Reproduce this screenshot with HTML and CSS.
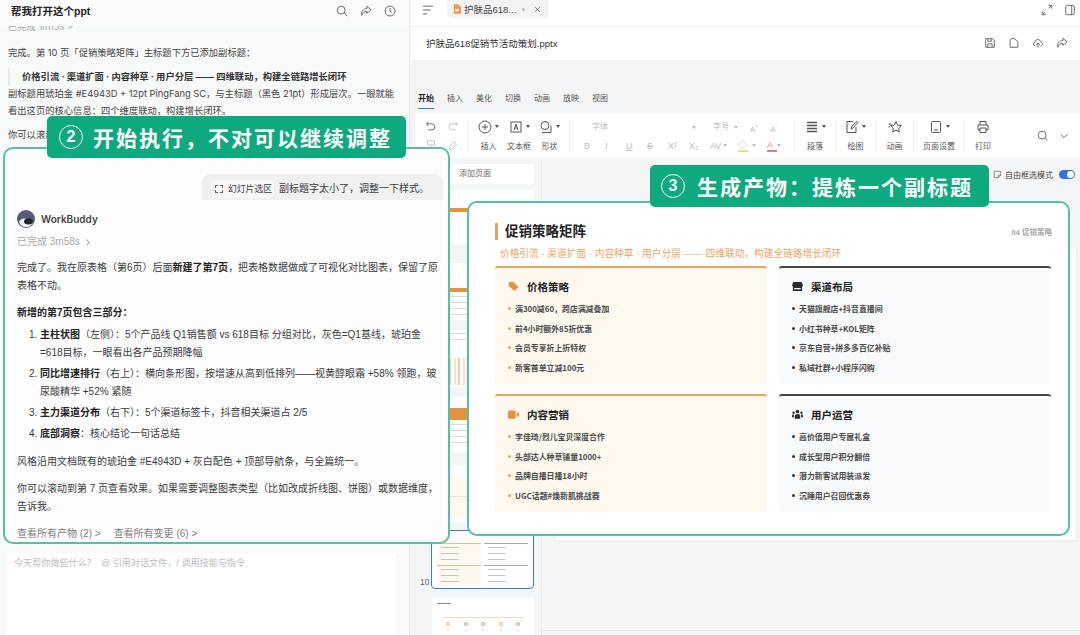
FILE: index.html
```html
<!DOCTYPE html>
<html lang="zh-CN">
<head>
    <meta charset="UTF-8">
    <title>WorkBuddy</title>
    <link rel="stylesheet" href="styles.css">
</head>
<body>
    <div class="app">
        <!-- left: chat -->
        <section class="chat">
            <header class="chat-head">
                <h1>帮我打开这个ppt</h1>
                <div class="head-icons">
                    <svg class="ic" viewBox="0 0 14 14"><circle cx="6" cy="6" r="4.6"/><path d="M9.500 9.500L13 13"/></svg>
                    <svg class="ic" viewBox="0 0 14 14"><path d="M8 1.500l5 4.200-5 4V7.300C5 7.300 3 9 2 12c-.6-4.500 1.500-7.500 6-7.900z"/></svg>
                    <svg class="ic" viewBox="0 0 14 14"><circle cx="7" cy="7" r="5.800"/><path d="M7 3.500V7l2.300 1.500"/></svg>
                </div>
            </header>
            <div class="chat-old">
                <p class="old-done">已完成 1m15s &gt;</p>
                <p class="old-line">完成。第 10 页「促销策略矩阵」主标题下方已添加副标题：</p>
                <blockquote>价格引流 · 渠道扩面 · 内容种草 · 用户分层 —— 四维联动，构建全链路增长闭环</blockquote>
                <p class="old-para">副标题用琥珀金 #E4943D + 12pt PingFang SC，与主标题（黑色 21pt）形成层次。一眼就能看出这页的核心信息：四个维度联动，构建增长闭环。</p>
                <p class="old-line">你可以滚动查看效果。</p>
            </div>
            <div class="chat-input">今天帮你做些什么？ &nbsp;@ 引用对话文件，/ 调用技能与指令</div>
        </section>

        <!-- right: document -->
        <section class="doc">
            <div class="tabbar">
                <svg class="ic menu-ic" viewBox="0 0 14 14"><path d="M1 2.500h12M1 7h9M1 11.500h5"/></svg>
                <div class="tab">
                    <svg class="file-ic" viewBox="0 0 10 12"><path d="M1 0h5.500L10 3.500V12H1z" fill="#ee9a4d"/><rect x="3" y="6" width="4" height="3" fill="#fff"/></svg>
                    <span>护肤品618...</span>
                    <i class="tab-dot"></i>
                    <svg class="ic tab-x" viewBox="0 0 10 10"><path d="M1.500 1.500l7 7M8.500 1.500l-7 7"/></svg>
                </div>
                <div class="tabbar-right">
                    <svg class="ic" viewBox="0 0 14 14"><path d="M8.500 1.500h4v4M12.500 1.500L9 5M5.500 12.500h-4v-4M1.500 12.500L5 9"/></svg>
                    <svg class="ic" viewBox="0 0 14 14"><rect x="2" y="1.500" width="10" height="11" rx="2"/><path d="M9 1.500v11"/></svg>
                </div>
            </div>
            <div class="titlebar">
                <span>护肤品618促销节活动策划.pptx</span>
                <div class="title-icons">
                    <svg class="ic" viewBox="0 0 14 14"><path d="M2 2h8l2 2v8H2zM4.500 2v3h4V2M4.500 12V8h5v4"/></svg>
                    <svg class="ic" viewBox="0 0 14 14"><path d="M2.500 3.500V12h9V5.500L8 2H4z"/></svg>
                    <svg class="ic" viewBox="0 0 14 14"><path d="M4 10.500C1 10.500 1 6.500 3.500 6c.5-4 6-4 7 0 2.500.5 2.500 4.500-.5 4.500M7 12.500V7M5 9l2-2 2 2"/></svg>
                    <svg class="ic" viewBox="0 0 14 14"><path d="M8 1.500l5 4.200-5 4V7.300C5 7.300 3 9 2 12c-.6-4.500 1.500-7.500 6-7.900z"/></svg>
                </div>
            </div>
            <nav class="ribbon-tabs">
                <span class="on">开始</span><span>插入</span><span>美化</span><span>切换</span><span>动画</span><span>放映</span><span>视图</span>
            </nav>
            <div class="toolbar">
                <div class="tool-group history">
                    <svg class="ic" viewBox="0 0 14 14"><path d="M4 2L2 4.500 4 7M2 4.500h6a3.500 3.500 0 0 1 0 7H4"/></svg>
                    <svg class="ic faint" viewBox="0 0 14 14"><path d="M10 2l2 2.500L10 7M12 4.500H6a3.500 3.500 0 0 0 0 7h4"/></svg>
                    <svg class="ic faint" viewBox="0 0 14 14"><path d="M3 2h8v5H3zM7 7v5"/></svg>
                    <svg class="ic faint" viewBox="0 0 14 14"><path d="M3 9l5-6 3 3-5 6H3z"/></svg>
                </div>
                <div class="tool-group big insert">
                    <div class="tool"><div class="tool-ic"><svg class="ic lg" viewBox="0 0 14 14"><circle cx="7" cy="7" r="6"/><path d="M7 4v6M4 7h6"/></svg><b class="caret"></b></div><span>插入</span></div>
                    <div class="tool"><div class="tool-ic"><svg class="ic lg" viewBox="0 0 14 14"><rect x="2" y="2" width="10" height="10"/><path d="M5 10l2-6 2 6M5.800 8h2.400"/></svg><b class="caret"></b></div><span>文本框</span></div>
                    <div class="tool"><div class="tool-ic"><svg class="ic lg" viewBox="0 0 14 14"><circle cx="6" cy="5.500" r="4"/><path d="M3 12.500h9M12 6v6"/></svg><b class="caret"></b></div><span>形状</span></div>
                </div>
                <div class="tool-group font">
                    <div class="font-row">
                        <span class="font-name">字体</span><b class="caret faint-caret"></b>
                        <span class="font-size">字号</span><b class="caret faint-caret"></b>
                        <span class="font-grow">A<sup>+</sup></span><span class="font-grow">A<sup>-</sup></span>
                    </div>
                    <div class="font-row styles">
                        <span>B</span><span class="em">I</span><span class="un">U</span><span class="st">S</span><span>X²</span><span>X₂</span><span>AV</span><b class="caret faint-caret"></b>
                        <span class="mark">◇</span><b class="caret faint-caret"></b><span class="red">A</span><b class="caret faint-caret"></b>
                    </div>
                </div>
                <div class="tool-group big w-41">
                    <div class="tool"><div class="tool-ic"><svg class="ic lg" viewBox="0 0 14 14"><path d="M2 2.500h10M2 5.500h10M2 8.500h10M2 11.500h10" stroke-width="1.600"/></svg><b class="caret"></b></div><span>段落</span></div>
                </div>
                <div class="tool-group big w-40">
                    <div class="tool"><div class="tool-ic"><svg class="ic lg" viewBox="0 0 14 14"><path d="M11 7v5.500H2v-11h6M6 9l1-3 5-4.500 1 1L8 8z"/></svg><b class="caret"></b></div><span>绘图</span></div>
                </div>
                <div class="tool-group big w-38">
                    <div class="tool"><div class="tool-ic"><svg class="ic lg" viewBox="0 0 14 14"><path d="M8 1.500l1.700 3.600 3.800.5-2.800 2.600.7 3.800L8 10.200l-3.400 1.800.7-3.800-2.800-2.600 3.800-.5zM.5 4h3M.5 7h1.500"/></svg></div><span>动画</span></div>
                </div>
                <div class="tool-group big w-51">
                    <div class="tool"><div class="tool-ic"><svg class="ic lg" viewBox="0 0 14 14"><rect x="2.500" y="1.500" width="9" height="11" rx="1"/><path d="M5 10h4"/></svg><b class="caret"></b></div><span>页面设置</span></div>
                </div>
                <div class="tool-group big w-36 last">
                    <div class="tool"><div class="tool-ic"><svg class="ic lg" viewBox="0 0 14 14"><path d="M4 5V1.500h6V5M4 10H2V5h10v5h-2M4 8h6v4.500H4z"/></svg></div><span>打印</span></div>
                </div>
                <div class="tool-end">
                    <svg class="ic" viewBox="0 0 14 14"><circle cx="6" cy="6" r="4.600"/><path d="M9.500 9.500L12 12"/></svg>
                    <svg class="ic" viewBox="0 0 14 14"><path d="M3 5l4 4 4-4"/></svg>
                </div>
            </div>
            <div class="workspace">
                <aside class="slides">
                    <div class="add-page">添加页面</div>
                    <div class="thumb t1"><i class="t-band"></i></div>
                    <div class="thumb t2"><i class="t-band"></i><i class="t-lines"></i></div>
                    <div class="thumb t3"><i class="t-lines"></i><i class="t-bars"></i></div>
                    <div class="thumb t4"><i class="t-band"></i><i class="t-lines"></i></div>
                    <div class="thumb t5"><i class="t-cream"></i></div>
                    <div class="thumb-row">
                        <span>10</span>
                        <div class="thumb current">
                            <i class="t-grid warm-t"></i><i class="t-grid"></i><i class="t-grid warm-t"></i><i class="t-grid"></i>
                        </div>
                    </div>
                    <div class="thumb next">
                        <i class="t-title"></i>
                        <i class="t-rule"></i>
                        <div class="t-dots"><i></i><i class="gray"></i><i class="gray"></i><i></i><i class="gray"></i></div>
                    </div>
                </aside>
                <div class="canvas">
                    <div class="canvas-bar">
                        <svg class="ic sm" viewBox="0 0 14 14"><path d="M2 2h10v6l-4 4H2zM8 12V8h4"/></svg>
                        <span>自由框选模式</span>
                        <i class="switch"></i>
                    </div>
                    <div class="slide-paper"></div>
                    <div class="canvas-foot"></div>
                </div>
            </div>
        </section>
    </div>

    <!-- callouts over the app -->
    <div class="banner banner-run"><span class="num">2</span>开始执行，不对可以继续调整</div>
    <div class="banner banner-out"><span class="num">3</span>生成产物：提炼一个副标题</div>

    <article class="card card-chat">
        <div class="bubble"><span class="chip"><i class="chip-box"></i>幻灯片选区</span>副标题字太小了，调整一下样式。</div>
        <div class="bot">
            <svg class="avatar" viewBox="0 0 18 18"><circle cx="9" cy="9" r="9" fill="#59597a"/><path d="M2 12c2-4 5-4 8-3l6 2c0 4-4 6-7 6-3 0-6-2-7-5z" fill="#f4f4f6"/><ellipse cx="11.500" cy="11.500" rx="4.500" ry="3" fill="#23232e"/></svg>
            <b>WorkBuddy</b>
        </div>
        <div class="done">已完成 3m58s <svg class="ic sm" viewBox="0 0 14 14"><path d="M5 2.500L10 7l-5 4.500"/></svg></div>
        <p class="msg">完成了。我在原表格（第6页）后面<b>新建了第7页</b>，把表格数据做成了可视化对比图表，保留了原表格不动。</p>
        <p class="msg"><b>新增的第7页包含三部分：</b></p>
        <ol class="msg-list">
            <li><b>主柱状图</b>（左侧）：5个产品线 Q1销售额 vs 618目标 分组对比，灰色=Q1基线，琥珀金<br>=618目标，一眼看出各产品预期降幅</li>
            <li><b>同比增速排行</b>（右上）：横向条形图，按增速从高到低排列——视黄醇眼霜 +58% 领跑，玻尿酸精华 +52% 紧随</li>
            <li><b>主力渠道分布</b>（右下）：5个渠道标签卡，抖音相关渠道占 2/5</li>
            <li><b>底部洞察</b>：核心结论一句话总结</li>
        </ol>
        <p class="msg">风格沿用文档既有的琥珀金 #E4943D + 灰白配色 + 顶部导航条，与全篇统一。</p>
        <p class="msg">你可以滚动到第 7 页查看效果。如果需要调整图表类型（比如改成折线图、饼图）或数据维度，告诉我。</p>
        <div class="links"><span>查看所有产物 (2) &gt;</span><span>查看所有变更 (6) &gt;</span></div>
    </article>

    <article class="card card-slide">
        <div class="slide-head">
            <h2>促销策略矩阵</h2>
            <span>04 促销策略</span>
        </div>
        <p class="slide-sub">价格引流 · 渠道扩面 · 内容种草 · 用户分层 —— 四维联动，构建全链路增长闭环</p>
        <div class="matrix">
            <div class="cell warm">
                <h3><svg class="cell-ic" viewBox="0 0 12 12"><path d="M1 1h5l5.500 5.500-4.500 4.500L1 5.500z"/></svg>价格策略</h3>
                <ul>
                    <li>满300减60，跨店满减叠加</li>
                    <li>前4小时额外85折优惠</li>
                    <li>会员专享折上折特权</li>
                    <li>新客首单立减100元</li>
                </ul>
            </div>
            <div class="cell cool">
                <h3><svg class="cell-ic" viewBox="0 0 12 12"><path d="M1.500 1h9L12 4.500c0 1-1 1.500-1 1.500v5H1V6S0 5.500 0 4.500zM2.500 7.500v1.500h7V7.500z"/></svg>渠道布局</h3>
                <ul>
                    <li>天猫旗舰店+抖音直播间</li>
                    <li>小红书种草+KOL矩阵</li>
                    <li>京东自营+拼多多百亿补贴</li>
                    <li>私域社群+小程序闪购</li>
                </ul>
            </div>
            <div class="cell warm">
                <h3><svg class="cell-ic" viewBox="0 0 12 12"><rect x="0" y="1.500" width="8.500" height="9" rx="1.500"/><path d="M9.500 4.500l2.500-1.500v6L9.500 7.500z"/></svg>内容营销</h3>
                <ul>
                    <li>李佳琦/烈儿宝贝深度合作</li>
                    <li>头部达人种草铺量1000+</li>
                    <li>品牌自播日播18小时</li>
                    <li>UGC话题#焕新肌挑战赛</li>
                </ul>
            </div>
            <div class="cell cool">
                <h3><svg class="cell-ic" viewBox="0 0 12 12"><circle cx="6" cy="2.800" r="1.900"/><circle cx="1.700" cy="4" r="1.300"/><circle cx="10.300" cy="4" r="1.300"/><path d="M3 10.500V8c0-1.500 1-2.500 3-2.500s3 1 3 2.500v2.500zM0 9V7.500c0-1 .7-1.700 2-1.700v3.200zM12 9V7.500c0-1-.7-1.700-2-1.700v3.200z"/></svg>用户运营</h3>
                <ul>
                    <li>高价值用户专属礼盒</li>
                    <li>成长型用户积分翻倍</li>
                    <li>潜力新客试用装派发</li>
                    <li>沉睡用户召回优惠券</li>
                </ul>
            </div>
        </div>
    </article>
</body>
</html>
```

FILE: styles.css
```css
* {
    margin: 0;
    padding: 0;
    box-sizing: border-box;
}

html, body {
    width: 1080px;
    height: 635px;
    overflow: hidden;
}

body {
    position: relative;
    font-family: "Liberation Sans", "Noto Sans CJK SC", sans-serif;
    color: #2c2c2e;
    background: #f4f5f6;
}

.app {
    display: flex;
    height: 635px;
}

.ic {
    width: 12px;
    height: 12px;
    fill: none;
    stroke: #555;
    stroke-width: 1;
    flex: none;
}

.ic.lg { width: 14px; height: 14px; }
.ic.sm { width: 9px; height: 9px; }
.ic.faint { stroke: #bbb; }

/* chat */
.chat {
    width: 410px;
    flex: none;
    display: flex;
    flex-direction: column;
    background: #f8f9f9;
    border-right: 1px solid #e9eaeb;
}

.chat-head {
    height: 26px;
    flex: none;
    display: flex;
    align-items: center;
    justify-content: space-between;
    padding: 0 13px 5px 11px;
    background: #fbfbfb;
    position: relative;
    z-index: 1;
}

.chat-head h1 {
    font-size: 10.500px;
    font-weight: 700;
    color: #222;
}

.head-icons {
    display: flex;
    gap: 12px;
}

.chat-old {
    flex: 1;
    padding: 0 8px;
    font-family: "Inter", "Noto Sans CJK SC", sans-serif;
    font-size: 9.300px;
    line-height: 17px;
    color: #444;
}

.old-done {
    color: #aaa;
    margin-top: -8px;
}

.old-line {
    margin-top: 9px;
}

.chat-old blockquote {
    margin: 7px 0 0;
    padding-left: 12px;
    border-left: 2px solid #e8e8e8;
    font-weight: 700;
    color: #333;
}

.old-para {
    width: 395px;
}

.old-para + .old-line {
    margin-top: 7px;
}

.chat-input {
    height: 82px;
    flex: none;
    margin: 0 13px 0 6px;
    padding: 3px 8px;
    font-size: 9.100px;
    line-height: 14px;
    color: #bdbdbd;
    background: #fff;
}

/* doc */
.doc {
    flex: 1;
    min-width: 0;
    display: flex;
    flex-direction: column;
}

.tabbar {
    height: 27px;
    flex: none;
    display: flex;
    align-items: center;
    padding: 0 4px 7px 12px;
    background: #fff;
    border-bottom: 1px solid #f0f0f0;
}

.menu-ic {
    margin-right: 13px;
}

.tab {
    width: 102px;
    height: 18px;
    margin-top: -1px;
    display: flex;
    align-items: center;
    gap: 3px;
    padding: 0 5px 0 6px;
    font-size: 9.500px;
    white-space: nowrap;
    color: #444;
    background: #f3f3f4;
    border-radius: 0 0 5px 5px;
}

.file-ic {
    width: 8px;
    height: 10px;
    flex: none;
}

.tab-dot {
    width: 3px;
    height: 3px;
    flex: none;
    margin: 0 6px 0 3px;
    border-radius: 50%;
    background: #bbb;
}

.tab-x {
    width: 7px;
    height: 7px;
}

.tabbar-right {
    margin-left: auto;
    display: flex;
    gap: 11px;
}

.titlebar {
    height: 33px;
    flex: none;
    display: flex;
    align-items: center;
    justify-content: space-between;
    padding: 0 12px 2px 16px;
    font-size: 9.500px;
    color: #333;
    background: #fff;
}

.title-icons {
    display: flex;
    gap: 12px;
}

.ribbon-tabs {
    height: 53px;
    flex: none;
    display: flex;
    align-items: flex-end;
    gap: 13px;
    padding: 0 0 4px 8px;
    font-size: 8px;
    color: #555;
}

.ribbon-tabs span {
    padding-bottom: 4px;
    border-bottom: 1px solid transparent;
    line-height: 11px;
}

.ribbon-tabs .on {
    font-weight: 700;
    color: #222;
    border-bottom-color: #3b7de0;
}

.toolbar {
    height: 45px;
    flex: none;
    margin-left: 5px;
    display: flex;
    align-items: center;
    background: #fff;
    border-radius: 4px 0 0 4px;
}

.tool-group {
    height: 32px;
    flex: none;
    border-right: 1px solid #f2f2f2;
}

.history {
    width: 54px;
    display: grid;
    grid-template-columns: 12px 12px;
    gap: 7px 10px;
    align-content: center;
    padding-left: 10px;
}

.big {
    display: flex;
    justify-content: center;
}

.big.last {
    border-right: 0;
}

.insert {
    width: 101px;
    justify-content: flex-start;
    gap: 8px;
    padding-left: 9px;
}

.w-41 { width: 41px; }
.w-40 { width: 40px; }
.w-38 { width: 38px; }
.w-51 { width: 51px; }
.w-36 { width: 36px; }

.tool {
    display: flex;
    flex-direction: column;
    align-items: center;
    justify-content: space-between;
    font-size: 8px;
    color: #555;
    line-height: 11px;
}

.tool-ic {
    display: flex;
    align-items: center;
    gap: 3px;
}

.caret {
    width: 0;
    height: 0;
    flex: none;
    border: 2px solid transparent;
    border-top: 3px solid #555;
    border-bottom: 0;
}

.faint-caret {
    border-top-color: #bbb;
}

.font {
    width: 225px;
    padding-left: 14px;
    display: flex;
    flex-direction: column;
    justify-content: space-between;
    font-size: 8px;
    line-height: 12px;
    color: #bbb;
    white-space: nowrap;
}

.font-row {
    display: flex;
    align-items: center;
}

.font-name {
    width: 108px;
    flex: none;
    padding-left: 8px;
}

.font-size {
    margin: 0 5px 0 17px;
}

.font-grow {
    margin-left: 12px;
}

.font-grow sup {
    font-size: 5px;
}

.styles {
    font-size: 9px;
}

.styles span {
    width: 21px;
    flex: none;
}

.styles b {
    margin-left: -8px;
    margin-right: 11px;
}

.em { font-style: italic; }
.un { text-decoration: underline; }
.st { text-decoration: line-through; }
.styles .mark { width: 10px; border-bottom: 2px solid #e8e27a; line-height: 10px; margin-right: 12px; }
.styles .red { width: 10px; color: #d98; border-bottom: 2px solid #e0788a; line-height: 10px; margin-right: 8px; }

.tool-end {
    margin-left: 36px;
    display: flex;
    gap: 9px;
}

.workspace {
    flex: 1;
    min-height: 0;
    display: flex;
}

.slides {
    width: 132px;
    flex: none;
    padding: 6px 7px 0 21px;
    border-right: 1px solid #e8e9ea;
    display: flex;
    flex-direction: column;
    overflow: hidden;
}

.add-page {
    height: 20px;
    flex: none;
    padding-left: 28px;
    font-size: 8px;
    line-height: 20px;
    color: #666;
    background: #fff;
    border-radius: 3px;
}

.thumb {
    flex: none;
    height: 57px;
    background: #fff;
    overflow: hidden;
}

.t-band {
    display: block;
    background: #e4943d;
}

.t-lines {
    display: block;
    height: 20px;
    background: repeating-linear-gradient(#dcdcdc 0 1px, transparent 1px 6px);
    width: 60%;
    margin: 4px 0 0 15px;
}

.t1 { margin-top: 6px; height: 55px; padding-top: 18px; }
.t1 .t-band { height: 4px; }
.t2 { margin-top: 18px; padding-top: 25px; }
.t2 .t-band { height: 4px; }
.t3 { margin-top: 10px; }
.t3 .t-lines { height: 8px; margin: 3px 0 0 15px; }

.t-bars {
    display: block;
    height: 27px;
    margin: 17px 0 0 18px;
    background: linear-gradient(90deg, #f1cfa8 0 2px, transparent 2px 5px, #f8e2c8 5px 7px, transparent 7px);
    background-size: 9px 100%;
}

.t4 { margin-top: 10px; height: 56px; padding-top: 11px; }
.t4 .t-band { height: 12px; }
.t5 { margin-top: 12px; padding-top: 12px; }

.t-cream {
    display: block;
    height: 40px;
    background: linear-gradient(#fff8ef 0 19px, #efe2d2 19px 20px, #fff8ef 20px);
}

.thumb-row {
    position: relative;
    margin-top: 8px;
}

.thumb-row span {
    position: absolute;
    left: -11px;
    bottom: 2px;
    font-size: 8.500px;
    color: #666;
}

.current {
    height: 59px;
    display: grid;
    grid-template-columns: 1fr 1fr;
    gap: 2px 3px;
    padding: 12px 5px 3px;
    background: #fff;
    border: 1.500px solid #3f78d8;
    border-radius: 4px;
}

.t-grid {
    border-top: 1px solid #aaa;
    background-image: repeating-linear-gradient(transparent 0 3px, #c4c4c4 3px 4px, transparent 4px 6px);
    background-size: 40% 100%;
    background-position: 4px 0;
    background-repeat: no-repeat;
}

.warm-t {
    background-color: #fff8ef;
    border-top-color: #e8bd90;
}

.next {
    margin: 9px 0 0 1px;
    padding: 5px 10px 0;
    height: 60px;
    border-radius: 2px;
}

.t-title {
    display: block;
    width: 14px;
    height: 1px;
    margin-left: -5px;
    background: #888;
}

.t-rule {
    display: block;
    height: 1px;
    margin-top: 13px;
    background: #f4d9bd;
}

.t-dots {
    display: flex;
    justify-content: space-between;
    margin: 4px 4px 0;
}

.t-dots i {
    width: 4px;
    height: 4px;
    border: 1px solid #e8b67f;
    border-radius: 50%;
    box-shadow: 0 6px 0 -1px #e2e2e2;
}

.t-dots .gray {
    border-color: #aaa;
}

.canvas {
    flex: 1;
    min-width: 0;
    padding: 6px 0 0 13px;
    display: flex;
    flex-direction: column;
}

.canvas-bar {
    height: 20px;
    flex: none;
    display: flex;
    align-items: center;
    justify-content: flex-end;
    gap: 3px;
    padding-right: 5px;
    font-size: 8px;
    color: #444;
}

.switch {
    position: relative;
    width: 16px;
    height: 9px;
    margin-left: 3px;
    border-radius: 5px;
    background: #2f74e0;
}

.switch::after {
    content: "";
    position: absolute;
    right: 1px;
    top: 1px;
    width: 7px;
    height: 7px;
    border-radius: 50%;
    background: #fff;
}

.slide-paper {
    height: 292px;
    flex: none;
    margin: 64px 4px 0 0;
    background: #fff;
    box-shadow: 0 1px 3px rgba(0, 0, 0, .06);
}

.canvas-foot {
    height: 5px;
    margin: auto 0 0 -13px;
    border-top: 1px solid #e8e9ea;
}

/* callouts */
.banner {
    position: absolute;
    z-index: 3;
    display: flex;
    align-items: center;
    height: 42px;
    font-size: 21px;
    font-weight: 700;
    letter-spacing: 2px;
    color: #fff;
    background: #0fa97f;
    border-radius: 5px;
}

.banner .num {
    width: 24px;
    height: 24px;
    flex: none;
    border: 1.200px solid #fff;
    border-radius: 50%;
    text-align: center;
    font-size: 16px;
    font-weight: 700;
    line-height: 22px;
    letter-spacing: 0;
}

.banner-run {
    left: 47px;
    top: 116px;
    width: 359px;
    padding-left: 12px;
    gap: 10px;
}

.banner-out {
    left: 650px;
    top: 165px;
    width: 339px;
    padding-left: 11px;
    gap: 12px;
}

.card {
    position: absolute;
    z-index: 2;
    background: #fdfdfe;
    border: 2px solid #58bfa4;
    border-radius: 10px;
}

.card-chat {
    left: 3px;
    top: 147px;
    width: 447px;
    height: 397px;
    padding: 25px 4px 0 12px;
    font-size: 10px;
    line-height: 18px;
    color: #3a3a3c;
}

.bubble {
    height: 26px;
    width: 241px;
    margin-left: 185px;
    display: flex;
    align-items: center;
    gap: 5px;
    padding: 3px 0 0 10px;
    white-space: nowrap;
    background: #f0f0f1;
    border-radius: 9px 9px 0 0;
    font-size: 10px;
}

.chip {
    display: flex;
    align-items: center;
    gap: 5px;
    padding: 0 2px 0 3px;
    font-size: 8.800px;
    background: #f7f7f8;
    border-radius: 3px;
}

.chip-box {
    width: 8px;
    height: 8px;
    border: 1px dashed #666;
}

.bot {
    display: flex;
    align-items: center;
    gap: 6px;
    margin-top: 10px;
    font-size: 10px;
}

.bot b {
    font-weight: 600;
    font-family: "Inter", "Noto Sans CJK SC", sans-serif;
    color: #444;
}

.avatar {
    width: 18px;
    height: 18px;
}

.done {
    display: flex;
    align-items: center;
    gap: 3px;
    margin-top: 5px;
    color: #ababab;
}

.msg {
    margin-top: 8px;
    width: 428px;
}

.msg + .msg {
    margin-top: 9px;
}

.msg b {
    font-weight: 700;
    color: #222;
}

.msg-list {
    margin-top: 4px;
    padding-left: 23px;
    width: 428px;
}

.msg-list li {
    padding-bottom: 3px;
}

.msg-list b {
    color: #222;
}

.msg-list + .msg {
    margin-top: 7px;
}

.links {
    display: flex;
    gap: 13px;
    margin-top: 9px;
    color: #808080;
}

.card-slide {
    left: 467px;
    top: 201px;
    width: 603px;
    height: 335px;
    padding: 20px 16px 0 26px;
    background: #fff;
}

.slide-head {
    display: flex;
    align-items: center;
    justify-content: space-between;
}

.slide-head h2 {
    padding-left: 7px;
    border-left: 3.500px solid #e4a35d;
    font-size: 13.500px;
    line-height: 17px;
    font-weight: 700;
    color: #222;
}

.slide-head span {
    font-size: 7.500px;
    font-weight: 700;
    color: #aaa;
}

.slide-sub {
    margin: 7px 0 5px 5px;
    font-size: 9.700px;
    line-height: 14px;
    color: #e6a766;
}

.matrix {
    display: grid;
    grid-template-columns: 272px 272px;
    grid-auto-rows: 118px;
    column-gap: 12px;
    row-gap: 10px;
}

.cell {
    padding: 11px 0 0 13px;
    border-top: 2px solid #444;
    border-radius: 3px;
    background: #f8f9fb;
}

.warm {
    background: #fff8ef;
    border-top-color: #e6a45f;
}

.cool .cell-ic { fill: #2e2e30; }
.warm .cell-ic { fill: #e4943d; }

.cell h3 {
    display: flex;
    align-items: center;
    gap: 8px;
    height: 15px;
    font-size: 10.500px;
    font-weight: 700;
    color: #222;
}

.cell-ic {
    width: 11px;
    height: 11px;
    flex: none;
}

.cell ul {
    list-style: none;
    margin-top: 5px;
}

.cell li {
    position: relative;
    padding-left: 7px;
    font-family: "Noto Sans CJK SC", sans-serif;
    font-size: 7.900px;
    font-weight: 700;
    line-height: 19.500px;
    color: #4a4a4a;
}

.cell li::before {
    content: "";
    position: absolute;
    left: 0;
    top: 8px;
    width: 3px;
    height: 3px;
    border-radius: 50%;
    background: #333;
}

.warm li::before {
    background: #e4a35d;
}
```
